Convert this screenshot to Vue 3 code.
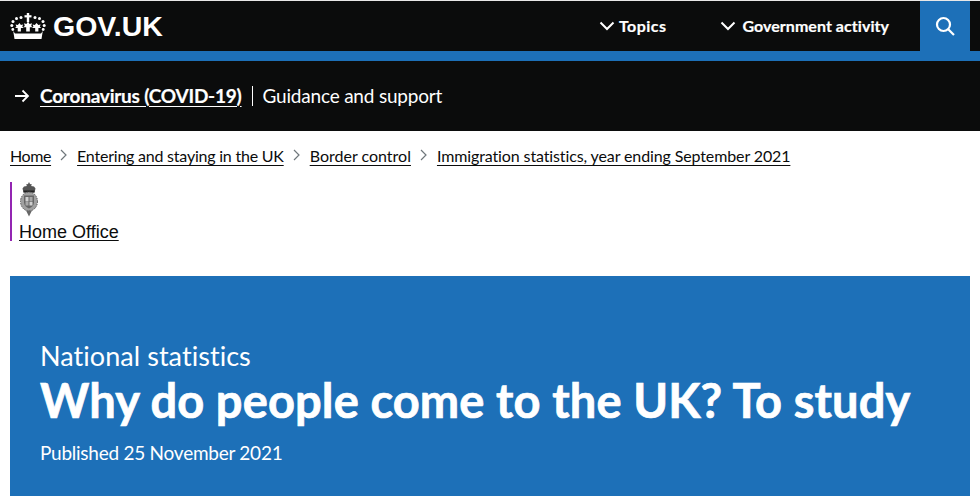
<script setup>
const crumbs = ['Home', 'Entering and staying in the UK', 'Border control', 'Immigration statistics, year ending September 2021']
</script>

<template>
  <div class="page">
    <header class="top">
      <a class="logo">
        <svg class="crown" width="36" height="27" viewBox="0 0 36 27">
          <g fill="#fff">
            <rect x="16.800" y="0" width="2.400" height="9" />
            <rect x="14.500" y="2.200" width="7" height="2.200" />
            <circle cx="11" cy="4.500" r="1.500" /><circle cx="25" cy="4.500" r="1.500" />
            <circle cx="6.500" cy="5.500" r="1.500" /><circle cx="29.500" cy="5.500" r="1.500" />
            <circle cx="3" cy="8.500" r="1.500" /><circle cx="33" cy="8.500" r="1.500" />
            <circle cx="1.800" cy="12.500" r="1.500" /><circle cx="34.200" cy="12.500" r="1.500" />
            <circle cx="2.800" cy="16.500" r="1.400" /><circle cx="33.200" cy="16.500" r="1.400" />
            <path d="M18 8.500l1.600 2.400 2.400-.6-.8 2.600 1.600 1.400h-3v4.200h-3.600v-4.200h-3l1.600-1.400-.8-2.600 2.400.6z" />
            <path d="M9.500 10l1.400 2 2.200-.6-.8 2.400 1.400 1.200h-2.800v3.500H7.700V15H5l1.400-1.200-.8-2.400 2.200.6z" />
            <path d="M26.500 10l1.900 2 2.200-.6-.8 2.400 1.400 1.200h-2.800v3.500h-3.200V15H22l1.400-1.200-.8-2.400 2.200.6z" />
            <path d="M5 20.500h26l1.800-2.500L31.500 26h-27L3.200 18z" />
          </g>
        </svg>
        <span class="wordmark">GOV.UK</span>
      </a>
      <nav class="nav">
        <a class="nav-item topics">
          <svg class="chev" width="16" height="10" viewBox="0 0 16 10"><path d="M1.500 1.500L8 8l6.500-6.500" fill="none" stroke="#fff" stroke-width="2" /></svg>
          <span>Topics</span>
        </a>
        <a class="nav-item activity">
          <svg class="chev" width="16" height="10" viewBox="0 0 16 10"><path d="M1.500 1.500L8 8l6.500-6.500" fill="none" stroke="#fff" stroke-width="2" /></svg>
          <span>Government activity</span>
        </a>
        <button class="search" aria-label="Search">
          <svg width="20" height="20" viewBox="0 0 20 20"><circle cx="8.500" cy="8.500" r="6.500" fill="none" stroke="#fff" stroke-width="2.200" /><path d="M13 13l6 6" stroke="#fff" stroke-width="2.200" /></svg>
        </button>
      </nav>
    </header>
    <div class="blue-bar"></div>
    <section class="covid">
      <svg class="arrow" width="16" height="14" viewBox="0 0 16 14"><path d="M1 7h13M8.500 1.500L14 7l-5.500 5.500" fill="none" stroke="#fff" stroke-width="1.800" /></svg>
      <a class="covid-link">Coronavirus (COVID-19)</a>
      <span class="covid-text">Guidance and support</span>
    </section>
    <nav class="crumbs">
      <template v-for="(c, i) in crumbs" :key="c">
        <svg v-if="i" class="sep" width="7" height="12" viewBox="0 0 7 12"><path d="M1 1l5 5-5 5" fill="none" stroke="#6f777b" stroke-width="1.200" /></svg>
        <a class="crumb">{{ c }}</a>
      </template>
    </nav>
    <div class="org">
      <svg class="crest" width="20" height="35" viewBox="0 0 20 35">
        <path d="M10 0l1 2 2 .5-1 1.500 3 .5 1.500 2-1 4H4.500l-1-4 1.500-2 3-.5-1-1.500 2-.5z" fill="#555" />
        <rect x="4.500" y="8.500" width="11" height="2" fill="#222" />
        <ellipse cx="10" cy="19.500" rx="8.500" ry="9.500" fill="#a0a0a0" />
        <ellipse cx="10" cy="19.500" rx="8.500" ry="9.500" fill="none" stroke="#555" stroke-width="1" stroke-dasharray="1.500 1" />
        <path d="M5 13.500h10v7c0 3-2.500 5-5 6-2.500-1-5-3-5-6z" fill="#666" />
        <path d="M6.500 15h3v4.500h-3zM10.500 20h3v3.500h-3z" fill="#d0d0d0" />
        <path d="M10.500 15h3v4.500h-3zM6.500 20h3v3.500h-3z" fill="#a8a8a8" />
        <path d="M7 28.500l3 6 3-6z" fill="#666" />
      </svg>
      <a class="org-link">Home Office</a>
    </div>
    <section class="hero">
      <p class="eyebrow">National statistics</p>
      <h1 class="title">Why do people come to the UK? To study</h1>
      <p class="published">Published 25 November 2021</p>
    </section>
  </div>
</template>

<style>
html, body { margin: 0; background: #fff; }
</style>

<style scoped>
.page { width: 980px; height: 496px; overflow: hidden; font-family: Lato, "Noto Sans", sans-serif; font-variant-ligatures: none; color: #0b0c0c; border-top: 1px solid #e8e8e8; box-sizing: border-box; }
a { color: inherit; text-decoration: none; }
.top { display: flex; justify-content: space-between; height: 50px; background: #0b0c0c; color: #fff; }
.logo { display: flex; align-items: center; margin-left: 10px; gap: 7px; }
.wordmark { font-family: "Liberation Sans", sans-serif; font-weight: 700; font-size: 28.500px; }
.nav { display: flex; align-items: stretch; margin-right: 10px; }
.nav-item { display: flex; align-items: center; font-size: 16px; font-weight: 700; padding-bottom: 2px; box-sizing: border-box; -webkit-text-stroke: 0.200px #fff; }
.chev { margin-top: 1px; }
.topics { margin-right: 54px; gap: 4px; letter-spacing: 0.450px; }
.activity { margin-right: 31px; gap: 6px; letter-spacing: 0.050px; }
.search { width: 50px; border: 0; padding: 0; background: #1d70b8; display: flex; align-items: center; justify-content: center; }
.blue-bar { height: 10px; background: #1d70b8; }
.covid { height: 70px; background: #0b0c0c; color: #fff; display: flex; align-items: center; padding: 0 14px 1px; font-size: 19px; box-sizing: border-box; }
.arrow { margin-right: 10px; }
.covid-link { font-weight: 700; letter-spacing: -0.220px; -webkit-text-stroke: 0.200px #fff; text-decoration: underline; text-underline-offset: 3px; padding-right: 10px; border-right: 1px solid #fff; line-height: 20px; }
.covid-text { padding-left: 10px; letter-spacing: -0.200px; }
.crumbs { display: flex; align-items: center; padding: 14px 10px 0; height: 34px; box-sizing: border-box; font-size: 16px; letter-spacing: -0.120px; }
.crumb { text-decoration: underline; text-underline-offset: 3px; }
.crumb:nth-of-type(1) { letter-spacing: -0.400px; }
.crumb:nth-of-type(2) { letter-spacing: -0.220px; }
.crumb:nth-of-type(3) { letter-spacing: 0; }
.sep { margin: 0 10px 0 9px; }
.org { margin: 17px 0 0 10px; height: 59px; border-left: 2px solid #9325b2; padding-left: 7px; display: flex; flex-direction: column; align-items: flex-start; }
.crest { display: block; flex: none; }
.org-link { margin-top: 5px; font-family: "Liberation Sans", sans-serif; font-size: 18px; line-height: 21px; text-decoration: underline; text-underline-offset: 2px; }
.hero { margin: 35px 10px 0; height: 230px; background: #1d70b8; color: #fff; padding: 65px 30px 0; box-sizing: border-box; }
.eyebrow { margin: 0; font-size: 27px; line-height: 30px; letter-spacing: 0.050px; }
.title { margin: 0; font-size: 47px; line-height: 58px; font-weight: 700; white-space: nowrap; letter-spacing: 0.120px; -webkit-text-stroke: 0.700px #fff; }
.published { margin: 11px 0 0; font-size: 19px; line-height: 25px; letter-spacing: -0.250px; }
</style>
